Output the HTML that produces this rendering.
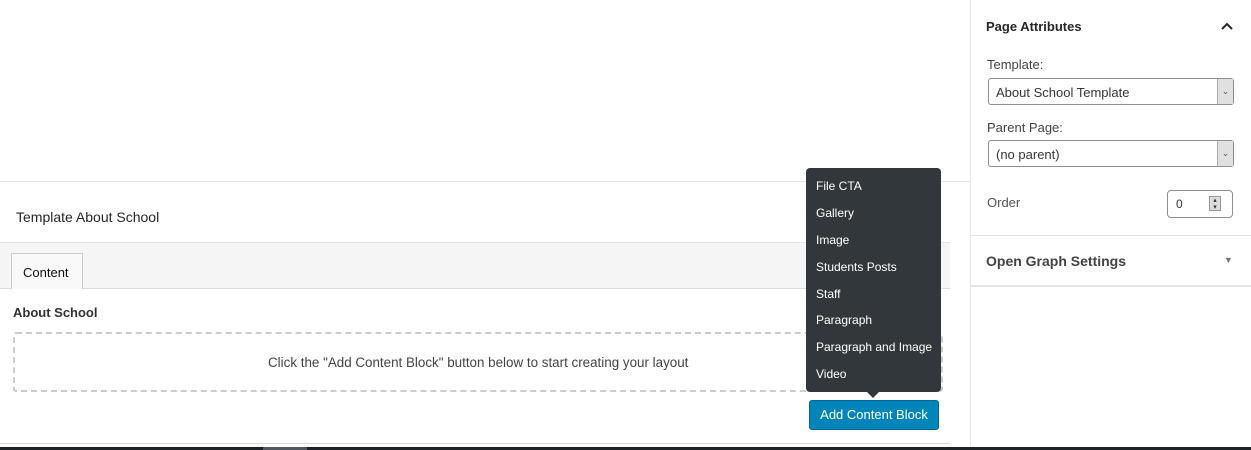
<!DOCTYPE html>
<html><head><style>
*{margin:0;padding:0;box-sizing:border-box}
body{width:1251px;height:450px;position:relative;background:#fff;font-family:"Liberation Sans",sans-serif;font-size:13px;color:#32373c;overflow:hidden}
.a{position:absolute}
.sel{position:absolute;left:988px;width:246px;height:27px;border:1px solid #8c8f94;border-radius:3px;background:#fff;font-size:13px;padding:6px 0 0 7px;color:#32373c}
.sel .ar{position:absolute;right:0;top:0;width:16px;height:25px;background:#e0e0e0;border-left:1px solid #aaa;font-size:9px;text-align:center;line-height:25px;color:#555}
.menu div{height:26.9px;line-height:26.9px;color:#fff;font-size:12px;padding-left:10px}
</style></head><body>
<div class="a" style="left:0;top:181px;width:970px;height:1px;background:#e2e4e7"></div>
<div class="a" style="left:16px;top:209px;font-size:14px;color:#23282d">Template About School</div>
<div class="a" style="left:0;top:242px;width:950px;height:47px;background:#f5f5f5;border-top:1px solid #e2e4e7;border-bottom:1px solid #dcdcde"></div>
<div class="a" style="left:11px;top:253px;width:72px;height:36px;background:#f9f9f9;border:1px solid #ccc;border-bottom:none;font-size:13px;color:#111;padding:11px 0 0 11px">Content</div>
<div class="a" style="left:13px;top:305px;font-weight:bold;font-size:13px;color:#333">About School</div>
<div class="a" style="left:13px;top:332px;width:930px;height:60px;border:2px dashed #ccc;border-radius:3px"></div>
<div class="a" style="left:268px;top:355px;font-size:13.4px;color:#444">Click the "Add Content Block" button below to start creating your layout</div>
<div class="a" style="left:0;top:443px;width:950px;height:1px;background:#dcdcde"></div>
<div class="a menu" style="left:806px;top:168px;width:135px;height:224px;background:#32373c;border-radius:4px;padding-top:5px">
<div>File CTA</div><div>Gallery</div><div>Image</div><div>Students Posts</div><div>Staff</div><div>Paragraph</div><div>Paragraph and Image</div><div>Video</div></div>
<div class="a" style="left:867px;top:392px;width:0;height:0;border-left:6px solid transparent;border-right:6px solid transparent;border-top:6px solid #32373c"></div>
<div class="a" style="left:809px;top:400px;width:130px;height:30px;background:#0085ba;border:1px solid #006799;border-radius:3px;color:#fff;font-size:13px;text-align:center;line-height:28px">Add Content Block</div>
<div class="a" style="left:970px;top:0;width:1px;height:447px;background:#e2e4e7"></div>
<div class="a" style="left:986px;top:19px;font-size:13px;font-weight:bold;color:#23282d">Page Attributes</div>
<svg class="a" style="left:1220px;top:21px" width="14" height="10"><path d="M2 8 L7 3 L12 8" stroke="#23282d" stroke-width="2" fill="none"/></svg>
<div class="a" style="left:987px;top:57px;color:#444">Template:</div>
<div class="sel" style="top:78px">About School Template<div class="ar">⌄</div></div>
<div class="a" style="left:987px;top:120px;color:#444">Parent Page:</div>
<div class="sel" style="top:140px">(no parent)<div class="ar">⌄</div></div>
<div class="a" style="left:987px;top:195px;color:#555">Order</div>
<div class="a" style="left:1167px;top:190px;width:66px;height:28px;border:1px solid #8c8f94;border-radius:4px;padding:6px 0 0 8px;font-size:12px">0<div class="a" style="left:41px;top:5px;width:12px;height:15px;background:#ddd;border:1px solid #999;font-size:7px;line-height:7px;text-align:center">▴<br>▾</div></div>
<div class="a" style="left:971px;top:235px;width:280px;height:1px;background:#e2e4e7"></div>
<div class="a" style="left:986px;top:253px;font-size:14px;font-weight:bold;color:#444">Open Graph Settings</div>
<div class="a" style="left:1224px;top:255px;font-size:9px;color:#777">▼</div>
<div class="a" style="left:971px;top:285px;width:280px;height:2px;background:#e2e4e7"></div>
<div class="a" style="left:0;top:447px;width:1251px;height:3px;background:#1d2327"></div>
<div class="a" style="left:263px;top:447px;width:44px;height:3px;background:#50575e"></div>
</body></html>
